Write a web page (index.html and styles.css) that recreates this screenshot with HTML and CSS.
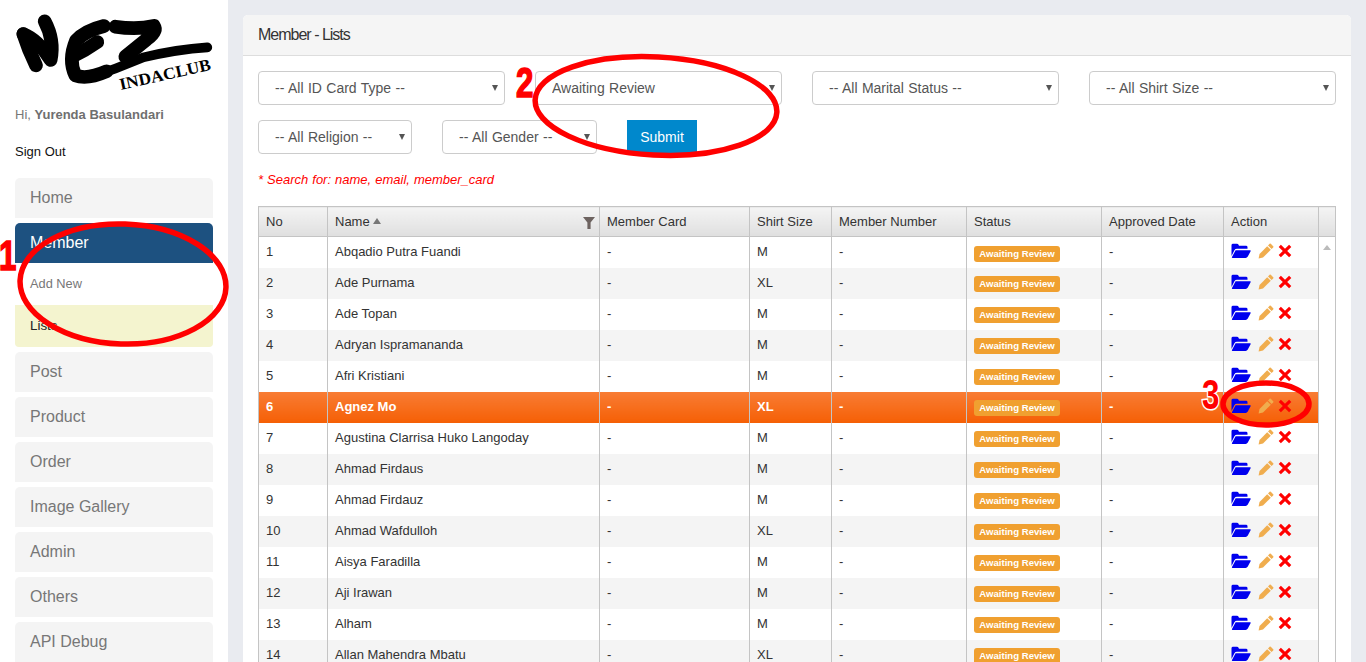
FILE: index.html
```html
<!DOCTYPE html>
<html lang="en">
<head>
<meta charset="utf-8">
<title>Member - Lists</title>
<link rel="stylesheet" href="styles.css">
</head>
<body>
<svg class="defs" width="0" height="0" aria-hidden="true">
  <symbol id="i-folder" viewBox="0 0 20 16">
    <path d="M0.5 13V2.2Q0.5 0.8 2 0.8H6Q7 0.8 7.4 1.6L8 2.8H15Q16.5 2.8 16.5 4.2V5.8H6Q4.2 5.8 3.4 7.2Z"/>
    <path d="M4.6 7.2H19.2Q20 7.2 19.6 8.2L16.8 13.6Q16 15 14.6 15H1.6Q0.4 15 1 14Z"/>
  </symbol>
  <symbol id="i-pencil" viewBox="0 0 16 16">
    <path d="M11.6 0.8Q12.2 0.2 12.8 0.8L15.2 3.2Q15.8 3.8 15.2 4.4L13.6 6L10 2.4Z"/>
    <path d="M9.2 3.2L12.8 6.8L5 14.6L0.6 15.6L1.5 11Z"/>
  </symbol>
  <symbol id="i-times" viewBox="0 0 14 14">
    <path d="M2.9 0.7L7 4.8L11.1 0.7L13.3 2.9L9.2 7L13.3 11.1L11.1 13.3L7 9.2L2.9 13.3L0.7 11.1L4.8 7L0.7 2.9Z"/>
  </symbol>
</svg>

<div class="layout">
  <aside class="sidebar">
    <svg class="logo" viewBox="15 15 594 225" role="img" aria-label="NEZ Indaclub">
      <g class="logo-brush">
        <path d="M40 72Q55 120 78 166"/>
        <path d="M40 72Q85 90 122 150Q134 90 104 34"/>
        <path d="M282 48Q225 62 198 92Q174 150 196 196Q230 210 290 184"/>
        <path d="M190 138Q225 122 262 96"/>
        <path d="M316 50Q380 60 432 48Q442 64 410 88L346 140"/>
      </g>
      <path class="logo-sweep" d="M236 204Q320 176 400 142Q500 118 592 112"/>
      <text class="logo-text" x="332" y="240" textLength="280" lengthAdjust="spacingAndGlyphs" transform="rotate(-12.5 332 240)">INDACLUB</text>
    </svg>
    <p class="greeting">Hi, <b>Yurenda Basulandari</b></p>
    <a class="signout">Sign Out</a>
    <nav class="menu">
      <a class="menu-item">Home</a>
      <div class="menu-group">
        <a class="menu-item active">Member</a>
        <a class="sub-item">Add New</a>
        <a class="sub-item current">Lists</a>
      </div>
      <a class="menu-item">Post</a>
      <a class="menu-item">Product</a>
      <a class="menu-item">Order</a>
      <a class="menu-item">Image Gallery</a>
      <a class="menu-item">Admin</a>
      <a class="menu-item">Others</a>
      <a class="menu-item">API Debug</a>
    </nav>
  </aside>

  <main class="main">
    <section class="panel">
      <header class="panel-head">Member - Lists</header>
      <div class="panel-body">
        <form class="filters">
          <div class="select w-wide"><select><option>-- All ID Card Type --</option></select></div>
          <div class="select w-wide"><select><option>Awaiting Review</option></select></div>
          <div class="select w-wide"><select><option>-- All Marital Status --</option></select></div>
          <div class="select w-wide"><select><option>-- All Shirt Size --</option></select></div>
          <div class="select w-religion"><select><option>-- All Religion --</option></select></div>
          <div class="select w-gender"><select><option>-- All Gender --</option></select></div>
          <button class="submit" type="button">Submit</button>
        </form>
        <p class="note">* Search for: name, email, member_card</p>
        <table class="grid">
          <colgroup>
            <col class="c-no"><col class="c-name"><col class="c-card"><col class="c-shirt"><col class="c-num"><col class="c-status"><col class="c-date"><col class="c-action"><col class="c-scroll">
          </colgroup>
          <thead>
            <tr>
              <th>No</th>
              <th class="th-name">Name <span class="sort"></span>
                <svg class="filter" viewBox="0 0 12 12"><path d="M0 0H12L7.6 5.6V12H4.4V5.6Z"/></svg>
              </th>
              <th>Member Card</th><th>Shirt Size</th><th>Member Number</th><th>Status</th><th>Approved Date</th><th>Action</th><th></th>
            </tr>
          </thead>
          <tbody id="rows"></tbody>
        </table>
      </div>
    </section>
  </main>
</div>

<svg class="marks" viewBox="0 0 1366 662" aria-hidden="true">
  <ellipse class="ring" cx="123" cy="284" rx="103" ry="60" transform="rotate(2 123 284)"/>
  <ellipse class="ring" cx="656" cy="106" rx="121" ry="49" transform="rotate(3 656 106)"/>
  <ellipse class="ring" cx="1266" cy="404" rx="43" ry="21"/>
  <text class="digit" transform="translate(-1 270) scale(.78 1.05)">1</text>
  <text class="digit" transform="translate(516 97) scale(.78 1.05)">2</text>
  <text class="digit digit-out" transform="translate(1202 409) scale(.78 1.05)">3</text>
</svg>

<script src="app.js"></script>
</body>
</html>
```
FILE: app.js
```js
var data = [
  ["Abqadio Putra Fuandi","M"],["Ade Purnama","XL"],["Ade Topan","M"],["Adryan Ispramananda","M"],
  ["Afri Kristiani","M"],["Agnez Mo","XL"],["Agustina Clarrisa Huko Langoday","M"],["Ahmad Firdaus","M"],
  ["Ahmad Firdauz","M"],["Ahmad Wafdulloh","XL"],["Aisya Faradilla","M"],["Aji Irawan","M"],
  ["Alham","M"],["Allan Mahendra Mbatu","XL"]
];
var html = "";
data.forEach(function (r, i) {
  var cls = i === 5 ? "selected" : (i % 2 ? "odd" : "");
  html += '<tr class="' + cls + '"><td>' + (i + 1) + "</td><td>" + r[0] + "</td><td>-</td><td>" + r[1] + "</td><td>-</td>" +
    '<td class="status"><span class="badge">Awaiting Review</span></td><td>-</td>' +
    '<td class="actions"><svg class="ic ic-folder"><use href="#i-folder"/></svg><svg class="ic ic-pencil"><use href="#i-pencil"/></svg><svg class="ic ic-times"><use href="#i-times"/></svg></td>' +
    (i === 0 ? '<td class="scroll" rowspan="14"><span class="scroll-up"></span></td>' : "") + "</tr>";
});
document.getElementById("rows").innerHTML = html;
```
FILE: styles.css
```css
* { box-sizing: border-box; }
html, body { margin: 0; height: 662px; overflow: hidden; }
body { font-family: "Liberation Sans", Arial, sans-serif; font-size: 14px; color: #333; background: #e9ebf0; position: relative; }
.defs { position: absolute; }
.layout { display: flex; height: 662px; overflow: hidden; }

/* sidebar */
.sidebar { width: 228px; flex: none; background: #fff; padding: 15px 15px 0; }
.logo { display: block; width: 198px; height: 75px; overflow: visible; }
.logo-brush path { fill: none; stroke: #000; stroke-width: 41; stroke-linecap: round; stroke-linejoin: round; }
.logo-sweep { fill: none; stroke: #000; stroke-width: 29; stroke-linecap: round; }
.logo-text { font-family: "Liberation Serif", serif; font-weight: bold; font-size: 50px; fill: #000; }
.greeting { margin: 17px 0 0; line-height: 16px; font-size: 13px; color: #777; }
.greeting b { color: #6f6f6f; }
.signout { display: block; margin-top: 21px; line-height: 16px; font-size: 13px; color: #111; }
.menu { margin-top: 18px; display: flex; flex-direction: column; gap: 5px; }
.menu-item { display: block; height: 40px; line-height: 40px; padding-left: 15px; background: #f4f4f4; border-radius: 5px 5px 0 0; font-size: 16px; color: #777; }
.menu-item.active { background: #1d5180; color: #fff; }
.sub-item { display: block; height: 42px; line-height: 42px; padding-left: 15px; font-size: 12.8px; color: #777; }
.sub-item.current { background: #f4f4cf; color: #222; border-radius: 0 0 4px 4px; font-size: 13.4px; }

/* main */
.main { flex: 1; padding: 15px 15px 0; min-width: 0; }
.panel { background: #fff; border-radius: 5px 5px 0 0; height: 700px; }
.panel-head { height: 41px; line-height: 40px; padding-left: 15px; background: #f5f5f5; border-bottom: 1px solid #ddd; border-radius: 5px 5px 0 0; font-size: 16px; letter-spacing: -1px; color: #333; }
.panel-body { padding: 15px 15px 0; }
.filters { display: flex; flex-wrap: wrap; column-gap: 30px; row-gap: 15px; }
.select { position: relative; height: 34px; }
.w-wide { width: 247px; }
.w-religion { width: 154px; }
.w-gender { width: 155px; }
.select select { appearance: none; -webkit-appearance: none; width: 100%; height: 34px; padding: 0 20px 0 16px; border: 1px solid #ccc; border-radius: 4px; background: #fff; font: 14px "Liberation Sans", Arial, sans-serif; word-spacing: .5px; color: #555; }
.select::after { content: ""; position: absolute; right: 7px; top: 14px; border-left: 3px solid transparent; border-right: 3px solid transparent; border-top: 6px solid #555; }
.submit { width: 70px; height: 34px; border: 0; background: #0088cc; color: #fff; font: 14px "Liberation Sans", Arial, sans-serif; padding: 0; }
.note { margin: 18px 0 0; line-height: 16px; font-size: 13px; word-spacing: .4px; font-style: italic; color: #f00; }

/* table */
.grid { margin-top: 18px; width: 1077px; border-collapse: collapse; table-layout: fixed; font-size: 13px; color: #333; }
.c-no { width: 69px; } .c-name { width: 272px; } .c-card { width: 150px; } .c-shirt { width: 82px; } .c-num { width: 135px; }
.c-status { width: 135px; } .c-date { width: 122px; } .c-action { width: 95px; } .c-scroll { width: 17px; }
.grid th { height: 30px; padding: 0 7px; text-align: left; font-weight: normal; background: linear-gradient(#f4f4f4, #dfdfdf); border: 1px solid #c4c4c4; }
.grid td { height: 31px; padding: 0 7px 2px; border-left: 1px solid #c4c4c4; border-right: 1px solid #c4c4c4; white-space: nowrap; }
.grid td.status { padding: 2px 7px 0; }
.grid td.actions { padding: 0 7px 3px; font-size: 0; }
.th-name { position: relative; }
.sort { display: inline-block; margin-left: 0; vertical-align: 2px; border-left: 4px solid transparent; border-right: 4px solid transparent; border-bottom: 6px solid #777; }
.filter { position: absolute; right: 4px; top: 10px; width: 12px; height: 12px; fill: #6d6360; }
.odd td { background: #f4f4f4; }
.selected td { background: linear-gradient(#f87c34, #f55f05); color: #fff; font-weight: bold; }
.grid td.scroll { background: #fff; vertical-align: top; padding: 8px 0 0 4px; color: #333; }
.scroll-up { display: block; width: 0; border-left: 4px solid transparent; border-right: 4px solid transparent; border-bottom: 5px solid #bbb; }
.badge { display: inline-block; width: 86px; height: 16px; line-height: 16px; text-align: center; background: #f0a030; border-radius: 3px; color: #fff; font-size: 9.6px; font-weight: bold; vertical-align: middle; }
.ic { display: inline-block; vertical-align: middle; }
.ic-folder { width: 20px; height: 16px; fill: #0000ee; }
.ic-pencil { width: 16px; height: 16px; fill: #f0ad4e; margin-left: 7px; }
.ic-times { width: 14px; height: 14px; fill: #f00; margin-left: 4px; }

/* hand-drawn annotations */
.marks { position: absolute; left: 0; top: 0; width: 1366px; height: 662px; pointer-events: none; }
.ring { fill: none; stroke: #f00; stroke-width: 5.5; }
.digit { font-family: "Liberation Sans", sans-serif; font-weight: bold; font-size: 40px; fill: #f00; stroke: #f00; stroke-width: 1.5; }
.digit-out { paint-order: stroke; stroke: #fff; stroke-width: 3; }
```
